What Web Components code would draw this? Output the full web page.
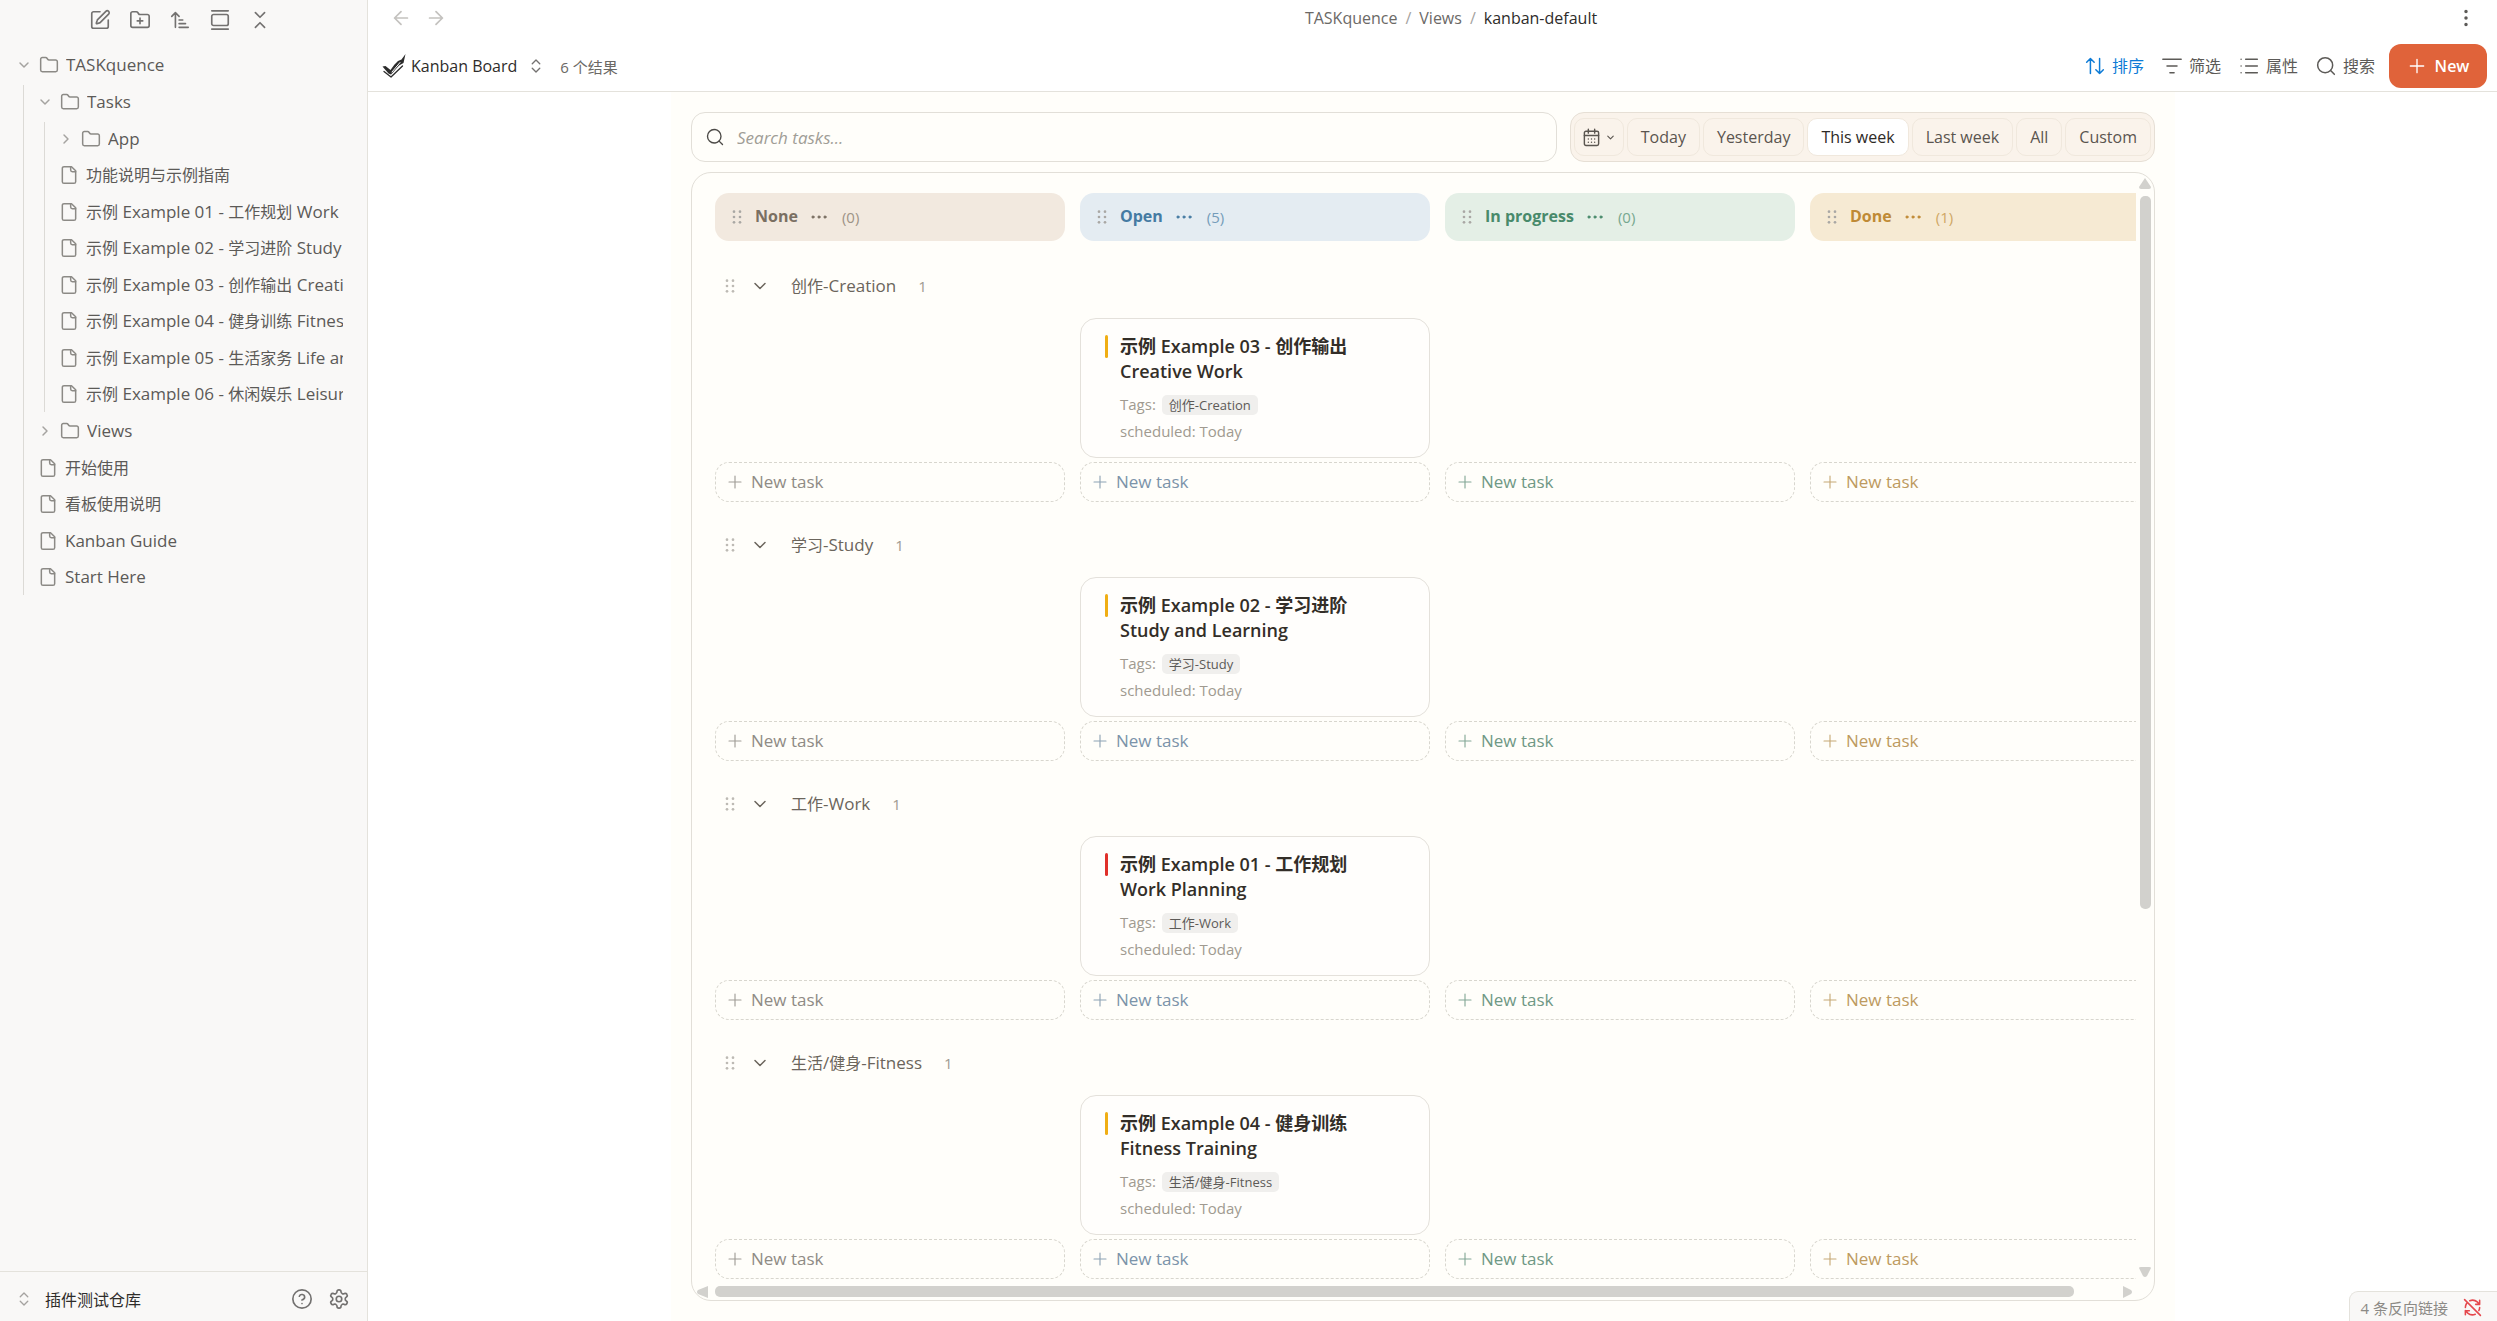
<!DOCTYPE html>
<html lang="zh-CN">
<head>
<meta charset="utf-8">
<meta name="viewport" content="width=device-width, initial-scale=1">
<title>kanban-default</title>
<style>
  html, body { margin: 0; height: 100%; }
  body {
    font-family: "Open Sans", "Noto Sans CJK SC", sans-serif;
    font-size: 17px;
    color: #5c5a57;
    background: #fff;
    --line: #e4e2dc;
    --muted: #8c8a86;
    --cjk: 16px;
  }
</style>
</head>
<body>
<app-shell></app-shell>
<script>
/* Shared helpers */
const BASE = `
  *, *::before, *::after { box-sizing: border-box; }
  button { font: inherit; color: inherit; background: none; border: 0; margin: 0; padding: 0; cursor: pointer; white-space: nowrap; }
  a { color: inherit; text-decoration: none; }
  .zh { font-size: var(--cjk); }
`;
const mix = t => t.replace(/[\u3400-\u9fff]+/g, m => `<span class="zh">${m}</span>`);

class Base extends HTMLElement {
  connectedCallback() {
    if (this.shadowRoot) return;
    this.attachShadow({ mode: 'open' }).innerHTML = `<style>${BASE}${this.css()}</style>${this.html()}`;
  }
  css() { return ''; }
  html() { return ''; }
  at(n, d = '') { return this.getAttribute(n) ?? d; }
}

const ICONS = {
  edit: '<path d="M12 3H5a2 2 0 0 0-2 2v14a2 2 0 0 0 2 2h14a2 2 0 0 0 2-2v-7"/><path d="M18.4 2.6a2.1 2.1 0 0 1 3 3L12.4 14.6a2 2 0 0 1-.9.5l-2.9.9a.5.5 0 0 1-.6-.6l.9-2.9a2 2 0 0 1 .5-.9z"/>',
  folderPlus: '<path d="M12 10v6M9 13h6"/><path d="M20 20a2 2 0 0 0 2-2V8a2 2 0 0 0-2-2h-7.9a2 2 0 0 1-1.7-.9L9.6 3.9A2 2 0 0 0 7.9 3H4a2 2 0 0 0-2 2v13a2 2 0 0 0 2 2Z"/>',
  sort: '<path d="m3 8 4-4 4 4M7 4v16M11 12h4M11 16h7M11 20h10"/>',
  gallery: '<path d="M3 2h18M3 22h18"/><rect x="3" y="6" width="18" height="12" rx="2"/>',
  collapse: '<path d="m7 20 5-5 5 5M7 4l5 5 5-5"/>',
  folder: '<path d="M20 20a2 2 0 0 0 2-2V8a2 2 0 0 0-2-2h-7.9a2 2 0 0 1-1.7-.9L9.6 3.9A2 2 0 0 0 7.9 3H4a2 2 0 0 0-2 2v13a2 2 0 0 0 2 2Z"/>',
  file: '<path d="M15 2H6a2 2 0 0 0-2 2v16a2 2 0 0 0 2 2h12a2 2 0 0 0 2-2V7Z"/><path d="M14 2v4a2 2 0 0 0 2 2h4"/>',
  down: '<path d="m6 9 6 6 6-6"/>',
  right: '<path d="m9 18 6-6-6-6"/>',
  updown: '<path d="m7 15 5 5 5-5M7 9l5-5 5 5"/>',
  help: '<circle cx="12" cy="12" r="10"/><path d="M9.1 9a3 3 0 0 1 5.8 1c0 2-3 3-3 3M12 17h.01"/>',
  gear: '<path d="M12.2 2h-.4a2 2 0 0 0-2 2v.2a2 2 0 0 1-1 1.7l-.4.3a2 2 0 0 1-2 0l-.2-.1a2 2 0 0 0-2.7.7l-.2.4a2 2 0 0 0 .7 2.7l.2.1a2 2 0 0 1 1 1.7v.5a2 2 0 0 1-1 1.8l-.2.1a2 2 0 0 0-.7 2.7l.2.4a2 2 0 0 0 2.7.7l.2-.1a2 2 0 0 1 2 0l.4.3a2 2 0 0 1 1 1.7v.2a2 2 0 0 0 2 2h.4a2 2 0 0 0 2-2v-.2a2 2 0 0 1 1-1.7l.4-.3a2 2 0 0 1 2 0l.2.1a2 2 0 0 0 2.7-.7l.2-.4a2 2 0 0 0-.7-2.7l-.2-.1a2 2 0 0 1-1-1.8v-.5a2 2 0 0 1 1-1.7l.2-.1a2 2 0 0 0 .7-2.7l-.2-.4a2 2 0 0 0-2.7-.7l-.2.1a2 2 0 0 1-2 0l-.4-.3a2 2 0 0 1-1-1.7V4a2 2 0 0 0-2-2z"/><circle cx="12" cy="12" r="3"/>',
  left: '<path d="m12 19-7-7 7-7M19 12H5"/>',
  forward: '<path d="M5 12h14M12 5l7 7-7 7"/>',
  more: '<g fill="currentColor"><circle cx="12" cy="12" r="1"/><circle cx="12" cy="5" r="1"/><circle cx="12" cy="19" r="1"/></g>',
  dots: '<g fill="currentColor"><circle cx="12" cy="12" r="1.5"/><circle cx="4" cy="12" r="1.5"/><circle cx="20" cy="12" r="1.5"/></g>',
  arrows: '<path d="m2 7.500 4.500-4.500 4.500 4.500M6.500 3v18M22 16.500 17.500 21 13 16.500M17.500 21V3"/>',
  filter: '<path d="M1 4h22M6 12h12M9.500 20h5"/>',
  list: '<path d="M8 4h14M8 12h14M8 20h14M2.500 4h.01M2.500 12h.01M2.500 20h.01"/>',
  search: '<circle cx="11" cy="11" r="9"/><path d="m22 22-4.500-4.500"/>',
  plus: '<path d="M4 12h16M12 4v16"/>',
  grip: '<g fill="currentColor" stroke="none"><circle cx="7.500" cy="4" r="2"/><circle cx="7.500" cy="12" r="2"/><circle cx="7.500" cy="20" r="2"/><circle cx="16.500" cy="4" r="2"/><circle cx="16.500" cy="12" r="2"/><circle cx="16.500" cy="20" r="2"/></g>',
  calendar: '<rect x="3" y="4" width="18" height="18" rx="2"/><path d="M8 1.500v5M16 1.500v5M3 9.500h18M8 14h.01M12 14h.01M16 14h.01M8 18h.01M12 18h.01M16 18h.01"/>',
  nosync: '<path d="M21 8V3M21 8h-5M21 8l-3-3a9 9 0 0 0-9.500-1.500M3 12a9 9 0 0 1 1.500-5M3 16v5M3 16h5M3 16l3 3a9 9 0 0 0 9.500 1.500M21 12a9 9 0 0 1-1 4M2 2l20 20"/>',
  logo: '<g stroke="none" fill="#2b2b2b"><path d="M.500 12.500 3.500 12l5 4 4-5.500L16 7l3.500-1.500L23.500 0 21.500 9 17 11.500 9 20.500 6.500 19.500z"/></g><path d="m2 17.500 7 5.500L20.500 12" stroke="#2b2b2b" stroke-width="1.300"/><path d="m10 18 8-9.500" stroke="#fff" stroke-width="1"/>'
};
customElements.define('ui-icon', class extends Base {
  css() {
    const s = this.at('size', '20');
    return `:host{display:inline-flex;flex:none;width:${s}px;height:${s}px} svg{width:100%;height:100%;overflow:visible}`;
  }
  html() {
    return `<svg viewBox="0 0 24 24" fill="none" stroke="currentColor" stroke-width="${this.at('stroke', '1.8')}" stroke-linecap="round" stroke-linejoin="round" aria-hidden="true">${ICONS[this.at('name')]}</svg>`;
  }
});

/* Sidebar */
customElements.define('tree-item', class extends Base {
  css() {
    return `
    :host { display: block; }
    .row { display: flex; align-items: center; width: 100%; height: 37px; padding-left: 16px; text-align: left; }
    :host([kind="file"]) .row { padding-left: 17px; }
    :host([kind="file"]:nth-child(even)) .row { height: 36px; }
    ui-icon { color: var(--muted); }
    .chev { color: #a5a3a0; }
    .glyph { margin-right: 7px; }
    .chev { margin-right: 7px; }
    .label { flex: 1; min-width: 0; overflow: hidden; white-space: nowrap; line-height: 24px; }
    .kids { margin-left: 21px; position: relative; }
    .kids::before { content: ""; position: absolute; left: 2px; top: 2px; bottom: 0; width: 1px; background: #dcdad6; }
    .kids[hidden] { display: none; }`;
  }
  html() {
    const folder = this.at('kind') === 'folder', open = this.hasAttribute('open');
    return `<button class="row" ${folder ? `aria-expanded="${open}"` : ''}>
      ${folder ? `<ui-icon class="chev" name="${open ? 'down' : 'right'}" size="16" stroke="2.2"></ui-icon><ui-icon class="glyph" name="folder" size="20"></ui-icon>`
               : `<ui-icon class="glyph" name="file" size="20"></ui-icon>`}
      <span class="label">${mix(this.at('label'))}</span></button>
      <div class="kids" ${open ? '' : 'hidden'}><slot></slot></div>`;
  }
});

customElements.define('side-bar', class extends Base {
  css() {
    return `
    :host { display: flex; flex-direction: column; width: 368px; flex: none; background: #f9f8f7; border-right: 1px solid var(--line); }
    header { display: flex; justify-content: center; gap: 18px; padding: 9px 7px 16px 0; color: #737170; }
    header button { display: flex; width: 22px; height: 22px; }
    nav { flex: 1; min-height: 0; overflow: hidden; padding-right: 24px; margin-top: -1px; }
    footer { display: flex; align-items: center; gap: 15px; height: 50px; padding: 4px 17px 0 15px; border-top: 1px solid var(--line); color: #737170; }
    .vault { display: flex; align-items: center; gap: 12px; flex: 1; font-size: 16px; color: #2e2c2a; }
    .vault ui-icon { color: #a5a3a0; }
    footer > button { display: flex; }`;
  }
  html() {
    const files = ['01 - 工作规划 Work Planning', '02 - 学习进阶 Study and Learning', '03 - 创作输出 Creative Work', '04 - 健身训练 Fitness Training', '05 - 生活家务 Life and Home', '06 - 休闲娱乐 Leisure'];
    const f = l => `<tree-item kind="file" label="${l}"></tree-item>`;
    return `<header>${[['edit', '新建笔记'], ['folderPlus', '新建文件夹'], ['sort', '排序'], ['gallery', '自动定位'], ['collapse', '全部折叠']].map(([n, l]) => `<button aria-label="${l}"><ui-icon name="${n}" size="22"></ui-icon></button>`).join('')}</header>
    <nav><tree-item kind="folder" label="TASKquence" open>
      <tree-item kind="folder" label="Tasks" open>
        <tree-item kind="folder" label="App"></tree-item>
        ${f('功能说明与示例指南')}${files.map(x => f('示例 Example ' + x)).join('')}
      </tree-item>
      <tree-item kind="folder" label="Views"></tree-item>
      ${['开始使用', '看板使用说明', 'Kanban Guide', 'Start Here'].map(f).join('')}
    </tree-item></nav>
    <footer><button class="vault"><ui-icon name="updown" size="18"></ui-icon>插件测试仓库</button>
      <button aria-label="帮助"><ui-icon name="help" size="22"></ui-icon></button>
      <button aria-label="设置"><ui-icon name="gear" size="22"></ui-icon></button></footer>`;
  }
});

/* Title bar and view toolbar */
customElements.define('title-bar', class extends Base {
  css() {
    return `
    :host { display: flex; align-items: center; height: 36px; padding: 0 20px 0 22px; font-size: 16px; }
    .hist { display: flex; gap: 13px; color: #c4c2bf; }
    button { display: flex; }
    .crumbs { flex: 1; display: flex; justify-content: center; gap: 8px; line-height: 24px; color: #6b6966; }
    .crumbs i { font-style: normal; color: #a5a3a0; }
    .crumbs b { font-weight: 400; color: #2e2c2a; }`;
  }
  html() {
    return `<div class="hist"><button aria-label="后退"><ui-icon name="left" size="22" stroke="1.9"></ui-icon></button><button aria-label="前进"><ui-icon name="forward" size="22" stroke="1.9"></ui-icon></button></div>
    <div class="crumbs"><a href="#">TASKquence</a><i>/</i><a href="#">Views</a><i>/</i><b>kanban-default</b></div>
    <button aria-label="更多"><ui-icon name="more" size="22"></ui-icon></button>`;
  }
});

customElements.define('view-toolbar', class extends Base {
  css() {
    return `
    :host { display: flex; align-items: center; padding: 8px 10px 3px 14px; border-bottom: 1px solid var(--line); }
    button { display: flex; align-items: center; line-height: 24px; }
    .view { gap: 5px; color: #2e2c2a; font-size: 16px; }
    .view ui-icon:last-child { margin-left: 5px; color: #737170; }
    .count { margin-left: 15px; font-size: 15px; color: #6b6966; flex: 1; }
    .tools { display: flex; gap: 18px; margin-right: 14px; font-size: 16px; }
    .tools button { gap: 7px; }
    .tools .on { color: #0d7bd6; }
    .new { height: 44px; width: 98px; justify-content: center; gap: 8px; border-radius: 12px; background: #e0633a; color: #fff; font-weight: 600; font-size: 16px; }`;
  }
  html() {
    const t = [['arrows', '排序', 'on'], ['filter', '筛选', ''], ['list', '属性', ''], ['search', '搜索', '']];
    return `<button class="view"><ui-icon name="logo" size="24"></ui-icon>Kanban Board<ui-icon name="updown" size="18"></ui-icon></button>
    <span class="count">6 个结果</span>
    <div class="tools">${t.map(([i, l, c]) => `<button class="${c}"><ui-icon name="${i}" size="20"></ui-icon>${l}</button>`).join('')}</div>
    <button class="new"><ui-icon name="plus" size="20" stroke="1.6"></ui-icon>New</button>`;
  }
});

/* Board filters */
customElements.define('task-search', class extends Base {
  css() {
    return `
    :host { display: block; flex: 1; min-width: 0; }
    label { display: flex; align-items: center; gap: 13px; height: 50px; padding: 0 14px; border: 1px solid #e2dfd8; border-radius: 14px; color: #4c4a47; }
    input { flex: 1; min-width: 0; border: 0; outline: 0; padding: 0; background: none; font: italic 17px "Open Sans", sans-serif; color: #3a3632; }
    input::placeholder { color: #a09d96; opacity: 1; }`;
  }
  html() { return `<label><ui-icon name="search" size="18"></ui-icon><input type="text" placeholder="Search tasks..." aria-label="Search tasks"></label>`; }
});

customElements.define('range-filter', class extends Base {
  css() {
    return `
    :host { display: flex; gap: 3px; height: 50px; padding: 5px 3px; border: 1px solid #e6dfd5; border-radius: 14px; background: #faf3eb; font-size: 16px; color: #5a554f; }
    button { display: flex; align-items: center; padding: 0 13px; border: 1px solid #f0e8dd; border-radius: 10px; line-height: 24px; }
    button.on { background: #fff; color: #2e2a26; }
    .cal { padding: 0 7px; gap: 4px; }`;
  }
  html() {
    return `<button class="cal" aria-label="选择日期"><ui-icon name="calendar" size="19"></ui-icon><ui-icon name="down" size="11" stroke="2.4"></ui-icon></button>` +
      ['Today', 'Yesterday', 'This week', 'Last week', 'All', 'Custom'].map(l => `<button class="${l === 'This week' ? 'on' : ''}" aria-pressed="${l === 'This week'}">${l}</button>`).join('');
  }
});

/* Board */
customElements.define('column-head', class extends Base {
  css() {
    return `
    :host { display: flex; align-items: center; width: 350px; height: 48px; flex: none; padding: 0 14px; border-radius: 14px; background: var(--bg); color: var(--fg); }
    .grip { color: #a9a7a4; margin-right: 10px; }
    h3 { margin: 0 12px 2px 0; font-size: 16px; font-weight: 700; line-height: 24px; }
    button { display: flex; }
    .n { margin-left: 14px; font-size: 15px; opacity: .7; line-height: 24px; }`;
  }
  html() {
    return `<ui-icon class="grip" name="grip" size="16"></ui-icon><h3>${this.at('label')}</h3>
    <button aria-label="更多"><ui-icon name="dots" size="18" stroke="1.2"></ui-icon></button><span class="n">(${this.at('count')})</span>`;
  }
});

customElements.define('task-card', class extends Base {
  css() {
    return `
    :host { display: block; height: 140px; padding: 15px 60px 0 24px; border: 1px solid #e4e1db; border-radius: 16px; background: #fffefc; }
    .title { display: flex; gap: 12px; }
    .title::before { content: ""; flex: none; width: 3px; height: 23px; margin-top: 1px; border-radius: 2px; background: var(--prio, #f0ae14); }
    h4 { margin: 0; font-size: 18px; line-height: 25px; font-weight: 600; color: #332e28; }
    .meta { margin: 7px 0 0 15px; font-size: 15px; line-height: 27px; color: #a09a90; white-space: nowrap; }
    .meta div { display: flex; align-items: center; gap: 6px; height: 27px; }
    .tag { padding: 0 7px; border-radius: 5px; background: #f0efed; color: #5c5a57; font-size: 13px; line-height: 20px; }`;
  }
  html() {
    return `<div class="title"><h4><slot></slot></h4></div>
    <div class="meta"><div>Tags: <a href="#" class="tag">${this.at('tag')}</a></div><div>scheduled: Today</div></div>`;
  }
});

customElements.define('new-task', class extends Base {
  css() {
    return `
    :host { display: block; }
    button { display: flex; align-items: center; gap: 7px; width: 100%; height: 40px; padding: 0 10px; border: 1px dashed #d8d6ce; border-radius: 14px; color: var(--fg); font-size: 17px; line-height: 24px; }
    ui-icon { opacity: .85; }`;
  }
  html() { return `<button><ui-icon name="plus" size="18" stroke="1.5"></ui-icon>New task</button>`; }
});

const COLS = [['None', 0, '#f2e9df', '#7a6f62', '#8f8b85'], ['Open', 5, '#e4ecf2', '#457ba3', '#7b93a9'], ['In progress', 0, '#e4efe6', '#488a6b', '#6f9885'], ['Done', 1, '#f6ead3', '#bf8a35', '#bd9a5f']];

customElements.define('board-lane', class extends Base {
  css() {
    return `
    :host { display: block; margin-bottom: 16px; }
    header { display: flex; align-items: center; height: 54px; padding-left: 7px; margin-bottom: 5px; color: #6b655c; }
    .grip { color: #bdbab4; margin-right: 12px; }
    header button { display: flex; }
    h3 { margin: 0 22px 0 21px; font-size: 17px; line-height: 24px; font-weight: 400; }
    .n { font-size: 15px; color: #a09a90; }
    .cells { display: grid; grid-template-columns: repeat(4, 350px); column-gap: 15px; row-gap: 4px; }
    .cell { min-height: 140px; }`;
  }
  html() {
    return `<header><ui-icon class="grip" name="grip" size="16"></ui-icon><button aria-label="折叠"><ui-icon name="down" size="20" stroke="1.8"></ui-icon></button><h3>${mix(this.at('label'))}</h3><span class="n">1</span></header>
    <div class="cells"><div class="cell"></div><div class="cell"><slot></slot></div><div class="cell"></div><div class="cell"></div>
    ${COLS.map(c => `<new-task style="--fg:${c[4]}"></new-task>`).join('')}</div>`;
  }
});

customElements.define('kanban-board', class extends Base {
  css() {
    return `
    :host { display: grid; grid-template: minmax(0, 1fr) 17px / minmax(0, 1fr) 18px; flex: 1; min-height: 0; border: 1px solid #e2dfd8; border-radius: 20px; overflow: hidden; }
    .view { margin-left: 23px; padding-top: 20px; overflow: hidden; }
    .heads { display: flex; gap: 15px; margin-bottom: 18px; }
    svg { flex: none; fill: #d2d1cd; }
    .v { display: flex; flex-direction: column; align-items: center; gap: 7px; padding: 5px 0 6px; }
    .h { display: flex; align-items: center; gap: 7px; padding: 0 4px; }
    .track { flex: 1; min-width: 0; min-height: 0; display: flex; }
    .v .track { width: 11px; flex-direction: column; }
    .h .track { height: 11px; }
    .track i { border-radius: 5px; background: #d2d1cd; }
    .v i { height: 67%; }
    .h i { width: 97%; }`;
  }
  html() {
    const lanes = [['创作-Creation', '03 - 创作输出 Creative Work'], ['学习-Study', '02 - 学习进阶 Study and Learning'], ['工作-Work', '01 - 工作规划 Work Planning', '#e0302a'], ['生活/健身-Fitness', '04 - 健身训练 Fitness Training']];
    return `<div class="view"><div class="heads">${COLS.map(([l, n, b, f]) => `<column-head label="${l}" count="${n}" style="--bg:${b};--fg:${f}"></column-head>`).join('')}</div>
    ${lanes.map(([g, t, p]) => `<board-lane label="${g}"><task-card tag="${g}" ${p ? `style="--prio:${p}"` : ''}>示例 Example ${t}</task-card></board-lane>`).join('')}</div>
    <div class="v"><svg width="12" height="11"><path d="M6 0 12 9Q12 11 10 11H2Q0 11 0 9Z"/></svg><div class="track"><i></i></div><svg width="12" height="10"><path d="M0 1Q0 0 2 0H10Q12 0 12 1L8 9Q6 11 4 9Z"/></svg></div>
    <div class="h"><svg width="12" height="12"><path d="M12 0V12L2 8Q0 6 2 4Z"/></svg><div class="track"><i></i></div><svg width="9" height="12"><path d="M0 0V12L8 8Q10 6 8 4Z"/></svg></div>`;
  }
});

customElements.define('link-status', class extends Base {
  css() {
    return `
    :host { position: fixed; right: 0; bottom: 0; display: flex; align-items: center; gap: 15px; height: 30px; padding: 2px 15px 0 11px; border: solid var(--line); border-width: 1px 0 0 1px; border-radius: 9px 0 0; background: #f9f8f7; font-size: 15px; color: #8c8a86; }
    ui-icon { color: #e5484d; }`;
  }
  html() { return `<span>4 条反向链接</span><ui-icon name="nosync" size="19" stroke="2"></ui-icon>`; }
});

customElements.define('app-shell', class extends Base {
  css() {
    return `
    :host { display: flex; height: 100vh; overflow: hidden; }
    main { flex: 1; min-width: 0; display: flex; flex-direction: column; }
    .scroll { flex: 1; min-height: 0; display: flex; justify-content: center; padding-right: 19px; }
    .page { width: 100%; max-width: 1504px; display: flex; flex-direction: column; gap: 10px; padding: 20px; background: #fffefa; }
    .filters { display: flex; gap: 13px; }`;
  }
  html() {
    return `<side-bar></side-bar><main><title-bar></title-bar><view-toolbar></view-toolbar>
    <div class="scroll"><div class="page"><div class="filters"><task-search></task-search><range-filter></range-filter></div><kanban-board></kanban-board></div></div></main>
    <link-status></link-status>`;
  }
});
</script>
</body>
</html>
